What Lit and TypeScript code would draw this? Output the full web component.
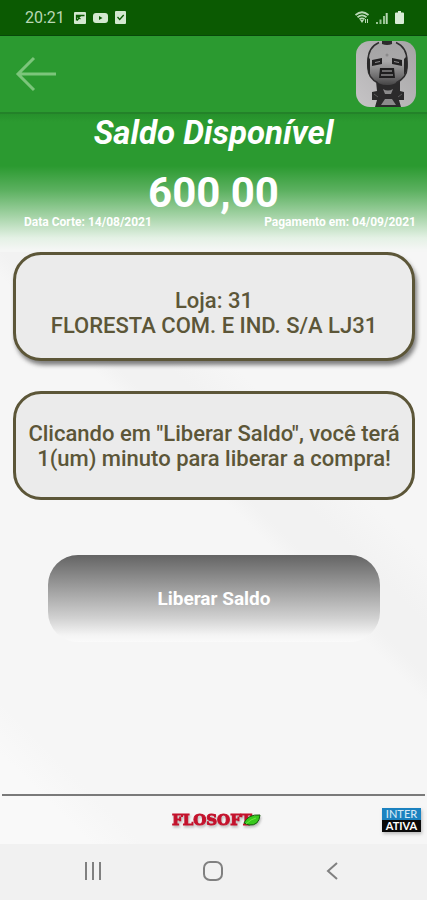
import { LitElement, html, css } from "lit";
import { customElement } from "lit/decorators.js";

@customElement("status-bar")
class StatusBar extends LitElement {
  static styles = css`
    :host {
      display: flex;
      align-items: center;
      justify-content: space-between;
      height: 36px;
      padding: 0 23px 0 25px;
      box-sizing: border-box;
      background: #0b5a02;
      border-bottom: 1px solid #08480a;
      color: #b9d8b5;
      font-size: 16px;
    }
    .group {
      display: flex;
      align-items: center;
      gap: 7px;
    }
    .clock {
      margin-right: 2px;
    }
    svg {
      display: block;
    }
  `;

  render() {
    return html`
      <div class="group">
        <span class="clock">20:21</span>
        <svg width="12" height="12" viewBox="0 0 12 12">
          <rect width="12" height="12" rx="1" fill="#d3e8d0" />
          <path d="M2.500 8.500V3.500h2.500V5H3M6 5V3.500h4.500M3 8.500L5 6l1.500 1" fill="none" stroke="#0b5a02" stroke-width="1.300" />
        </svg>
        <svg width="15" height="12" viewBox="0 0 15 12">
          <rect y="1" width="15" height="10" rx="3" fill="#d3e8d0" />
          <path d="M6 4l3.500 2L6 8z" fill="#0b5a02" />
        </svg>
        <svg width="11" height="13" viewBox="0 0 11 13">
          <rect width="11" height="13" rx="1" fill="#d3e8d0" />
          <path d="M2.500 6l2.200 2.500 4-4.500" fill="none" stroke="#0b5a02" stroke-width="1.300" />
        </svg>
      </div>
      <div class="group">
        <svg width="14" height="13" viewBox="0 0 14 13" fill="none" stroke="#b9d8b5">
          <path d="M.5 4Q7-1.500 13.500 4M2.500 6.200Q7 2.500 11.500 6.200M4.500 8.300Q7 6.500 9.500 8.300" stroke-width="1.800" />
          <path d="M5 9h4l-2 3z" fill="#b9d8b5" stroke="none" />
          <path d="M10.500 8v4M12.500 8v4" />
        </svg>
        <svg width="12" height="12" viewBox="0 0 12 12">
          <path d="M0 12v-2h2v2zM3.500 12V7.500h2V12zM7 12V4h2v8z" fill="#98c393" />
          <path d="M9.700 12V1h2v11z" fill="#b9d8b5" />
        </svg>
        <svg width="9" height="13" viewBox="0 0 9 13">
          <path d="M3 0h3v1.500h2q1 0 1 1V12q0 1-1 1H1q-1 0-1-1V2.500q0-1 1-1h2z" fill="#d9ecd6" />
        </svg>
      </div>
    `;
  }
}

@customElement("app-header")
class AppHeader extends LitElement {
  static styles = css`
    :host {
      display: flex;
      align-items: center;
      justify-content: space-between;
      height: 78px;
      padding: 0 11px 0 15px;
      box-sizing: border-box;
      background: #2b9a30;
      border-bottom: 2px solid #238229;
    }
    .back {
      padding: 0;
      border: 0;
      background: none;
    }
    svg {
      display: block;
    }
  `;

  render() {
    return html`
      <button class="back" aria-label="Voltar">
        <svg width="42" height="36" viewBox="0 0 42 36" fill="none" stroke="#7cc57b" stroke-width="3">
          <path d="M41 18H3M19 2L3 18l16 16" />
        </svg>
      </button>
      <svg width="60" height="66" viewBox="0 0 60 66" role="img" aria-label="Avatar">
        <defs>
          <linearGradient id="plate" x1="0" y1="1" x2="1" y2="0">
            <stop offset="0" stop-color="#c6c4c6" />
            <stop offset="1" stop-color="#a5a4a5" />
          </linearGradient>
          <linearGradient id="head" x1="0" y1="0" x2="0" y2="1">
            <stop offset="0" stop-color="#a5a4a5" />
            <stop offset=".45" stop-color="#a9a8a9" />
            <stop offset=".8" stop-color="#6f6e6f" />
            <stop offset="1" stop-color="#454445" />
          </linearGradient>
          <clipPath id="round"><rect width="60" height="66" rx="14" /></clipPath>
        </defs>
        <g clip-path="url(#round)">
          <rect width="60" height="66" fill="url(#plate)" />
          <path d="M20 40h24v10l4 1v8h-5l2 7H19l2-7h-5v-8l5-1z" fill="#2b2a2b" />
          <path d="M27 48q5 3 10 0l-2 5h-6zM25 64l4-6h7l4 6z" fill="#8b8a8b" />
          <path d="M18 53l4 3M46 53l-4 3" stroke="#5d5c5d" />
          <path d="M12 20C12 8 20 1 31 1s20 7 20 19v6c0 10-9 18-20 18S12 36 12 26z" fill="url(#head)" />
          <path d="M23 1.500C15 5 12 12 12 20v7c0 7 4 12 10 15M40 1.500C48 5 51 12 51 20v7c0 7-5 12-11 15" fill="none" stroke="#2f2e2f" stroke-width="1.500" />
          <path d="M12 16c-2 6-1 13 2 18V18zM50 16c3 6 2 13-2 18V18z" fill="#292829" />
          <path d="M26 0h10v3q-5 2-10 0z" fill="#2c2b2c" />
          <path d="M16 19l10-2v6l-10 2zM36 17l10 2v6l-10-2z" fill="#222122" />
          <path d="M19 21l5-1v1l-5 1zM38 20l5 1v1l-5-1z" fill="#8f8e8f" />
          <path d="M24 27h14l1 10H23z" fill="#1e1d1e" />
          <path d="M26 30h10M25 34h12" stroke="#858485" stroke-width="1.500" />
          <circle cx="31" cy="14" r="1.500" fill="#8b8a8b" />
        </g>
      </svg>
    `;
  }
}

@customElement("app-footer")
class AppFooter extends LitElement {
  static styles = css`
    :host {
      display: block;
      padding: 0 2px;
    }
    .bar {
      display: grid;
      grid-template-columns: 1fr auto 1fr;
      align-items: center;
      height: 50px;
      box-sizing: border-box;
      padding: 0 4px 0 10px;
      border-top: 2px solid #7a7a7a;
    }
    .brand {
      display: flex;
      align-items: center;
      grid-column: 2;
      color: #c4122c;
      font: bold 15px/18px "DejaVu Serif", serif;
      -webkit-text-stroke: 1px #c4122c;
      filter: drop-shadow(1px 2px 1px #8888);
    }
    .leaf {
      margin-left: -9px;
    }
    .partner {
      justify-self: end;
      width: 39px;
      color: #fff;
      text-align: center;
      font: 500 11px/12px Lato, sans-serif;
      box-shadow: 1px 2px 3px #8888;
    }
    .top {
      background: #1b82c0;
      color: #d5e8f5;
    }
    .bottom {
      background: #0a0a0a;
      font-weight: bold;
    }
  `;

  render() {
    return html`
      <div class="bar">
        <div class="brand">
          <span>FLOSOFT</span>
          <svg class="leaf" width="18" height="14" viewBox="0 0 18 14">
            <path d="M1 10Q5 1 17 2 16 13 6 12z" fill="#38c91d" stroke="#14580c" />
            <path d="M3 11Q8 6 13 5" fill="none" stroke="#6fe83f" />
          </svg>
        </div>
        <div class="partner">
          <div class="top">INTER</div>
          <div class="bottom">ATIVA</div>
        </div>
      </div>
    `;
  }
}

@customElement("system-nav")
class SystemNav extends LitElement {
  static styles = css`
    :host {
      display: grid;
      grid-template-columns: repeat(3, 120px);
      justify-content: center;
      height: 56px;
      background: #f1f1f1;
    }
    button {
      display: grid;
      place-items: center;
      padding: 0 2px 2px 0;
      border: 0;
      background: none;
    }
  `;

  render() {
    return html`
      <button aria-label="Recentes">
        <svg width="20" height="20" viewBox="0 0 20 20" stroke="#808080" stroke-width="2">
          <path d="M3 1v18M10 1v18M17 1v18" />
        </svg>
      </button>
      <button aria-label="Início">
        <svg width="20" height="20" viewBox="0 0 20 20" fill="none" stroke="#808080" stroke-width="2">
          <rect x="1" y="1" width="18" height="18" rx="6" />
        </svg>
      </button>
      <button aria-label="Voltar">
        <svg width="20" height="20" viewBox="0 0 20 20" fill="none" stroke="#808080" stroke-width="2">
          <path d="M14 2L5 10l9 8" />
        </svg>
      </button>
    `;
  }
}

@customElement("app-root")
class AppRoot extends LitElement {
  static styles = css`
    :host {
      display: flex;
      flex-direction: column;
      min-height: 100vh;
      background: linear-gradient(45deg, #f9f9f9 0 11%, #f6f6f6 15% 47%, #f2f2f2 49% 53%, #f6f6f6 58%);
      font-family: Roboto, sans-serif;
    }
    .hero {
      height: 138px;
      box-sizing: border-box;
      padding: 0 11px 0 24px;
      background: linear-gradient(#26902b, #2b9a30 8px 52px, #5bb05f 76px, #a4d3a6 102px, #e4f1e5 124px, #f5f6f5 136px);
      color: #fff;
      text-align: center;
    }
    h1 {
      margin: 0 13px 20px 0;
      font: italic bold 33px/38px Roboto, sans-serif;
    }
    .amount {
      margin: 0 13px 0 0;
      font: bold 42px/42px Roboto, sans-serif;
    }
    .dates {
      display: flex;
      justify-content: space-between;
      font: bold 12px/16px Roboto, sans-serif;
    }
    main {
      flex: 1;
      display: flex;
      flex-direction: column;
      padding: 0 12px 0 13px;
    }
    .card {
      display: grid;
      place-items: center;
      height: 109px;
      margin: 0 0 30px;
      box-sizing: border-box;
      border: 3px solid #5c5638;
      border-radius: 28px;
      background: #ebebeb;
      color: #5c5638;
      font-size: 22px;
      font-weight: 500;
      line-height: 25px;
      text-align: center;
    }
    .store {
      padding-top: 12px;
      box-shadow: 2px 4px 4px #444a;
    }
    .release {
      height: 87px;
      margin: 25px 35px;
      border: 0;
      border-radius: 30px;
      background: linear-gradient(#646464, #999 35%, #d0d0d0 72%, #f4f4f4 92%, #fafafa);
      color: #fff;
      font: bold 19px/24px Roboto, sans-serif;
    }
  `;

  render() {
    return html`
      <status-bar></status-bar>
      <app-header></app-header>
      <section class="hero">
        <h1>Saldo Disponível</h1>
        <p class="amount">600,00</p>
        <div class="dates">
          <span>Data Corte: 14/08/2021</span>
          <span>Pagamento em: 04/09/2021</span>
        </div>
      </section>
      <main>
        <section class="card store">
          <div>Loja: 31<br />FLORESTA COM. E IND. S/A LJ31</div>
        </section>
        <section class="card">
          <div>Clicando em "Liberar Saldo", você terá<br />1(um) minuto para liberar a compra!</div>
        </section>
        <button class="release">Liberar Saldo</button>
      </main>
      <app-footer></app-footer>
      <system-nav></system-nav>
    `;
  }
}
